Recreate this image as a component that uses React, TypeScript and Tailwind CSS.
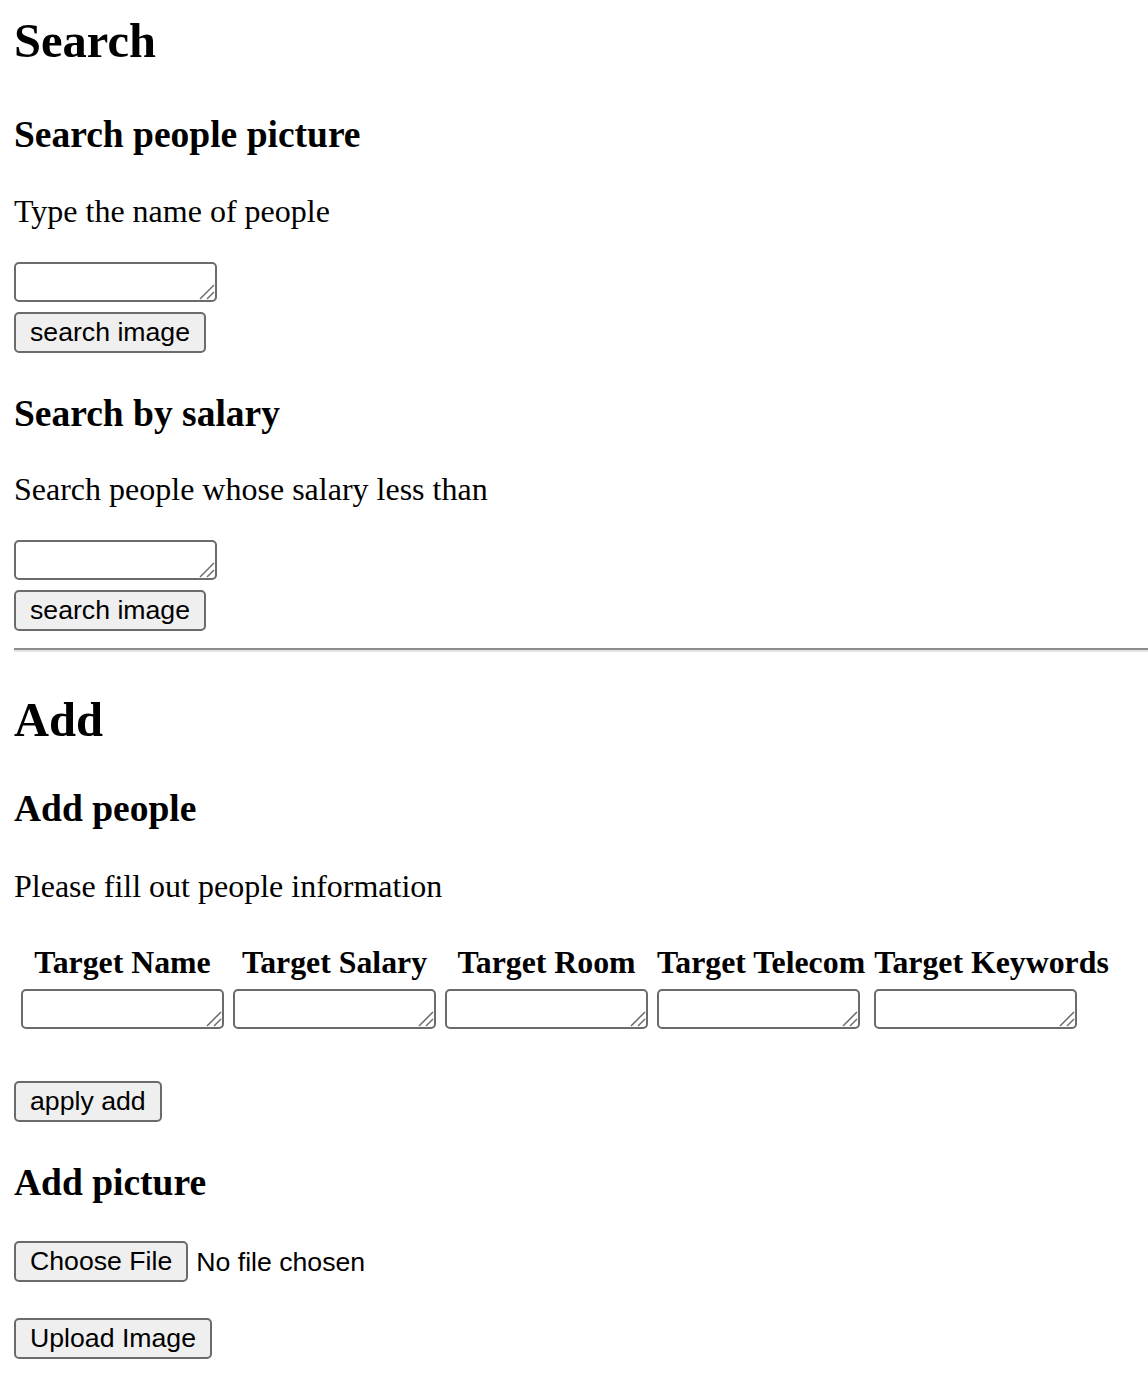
import React from "react";

const serif = "font-['Liberation_Serif','Times_New_Roman',serif]";
const sans = "font-['Liberation_Sans',Arial,sans-serif]";

function Grip() {
  return (
    <svg
      className="absolute right-[2px] bottom-[2px] pointer-events-none"
      width="16"
      height="16"
      viewBox="0 0 16 16"
    >
      <line x1="1" y1="15" x2="15" y2="1" stroke="#6b6b6b" strokeWidth="1.5" />
      <line x1="8" y1="15" x2="15" y2="8" stroke="#6b6b6b" strokeWidth="1.5" />
    </svg>
  );
}

function Box({ className = "" }: { className?: string }) {
  return (
    <div className={`relative w-[203px] h-[40px] ${className}`}>
      <textarea className="block w-full h-full resize-none border-2 border-[#6b6b6b] rounded-[5px] bg-white px-1 outline-none" />
      <Grip />
    </div>
  );
}

function Btn({ label, className = "" }: { label: string; className?: string }) {
  return (
    <button
      className={`inline-flex h-[41px] items-center px-[14px] border-2 border-[#6b6b6b] rounded-[5px] bg-[#efefef] text-black text-[26.67px] leading-none ${sans} ${className}`}
    >
      {label}
    </button>
  );
}

function App() {
  const fields = ["Target Name", "Target Salary", "Target Room", "Target Telecom", "Target Keywords"];

  return (
    <div className={`min-h-screen bg-white text-black pl-[14px] pb-[15px] ${serif}`}>
      {/* Search */}
      <h1 className="pt-[13px] text-[48.5px] leading-[55px] font-bold">Search</h1>

      <h2 className="mt-[45px] text-[37.5px] leading-[44px] font-bold">Search people picture</h2>
      <p className="mt-[36px] text-[32px] leading-[37px]">Type the name of people</p>
      <Box className="mt-[32px]" />
      <Btn label="search image" className="mt-[10px]" />

      <h2 className="mt-[39px] text-[37.5px] leading-[44px] font-bold">Search by salary</h2>
      <p className="mt-[35px] text-[32px] leading-[37px]">Search people whose salary less than</p>
      <Box className="mt-[32px]" />
      <Btn label="search image" className="mt-[10px]" />

      <div className="mt-[17px] h-[4px] border-t-2 border-b-2 border-t-[#8c8c8c] border-b-[#e4e4e4]" />

      {/* Add */}
      <h1 className="mt-[40px] text-[48.5px] leading-[55px] font-bold">Add</h1>

      <h2 className="mt-[40px] text-[37.5px] leading-[44px] font-bold">Add people</h2>
      <p className="mt-[37px] text-[32px] leading-[37px]">Please fill out people information</p>

      <table className="mt-[33px] border-separate border-spacing-[5px]">
        <thead>
          <tr>
            {fields.map((f) => (
              <th key={f} className="p-[2px] text-[31.8px] leading-[35px] font-bold text-center whitespace-nowrap">
                {f}
              </th>
            ))}
          </tr>
        </thead>
        <tbody>
          <tr>
            {fields.map((f) => (
              <td key={f} className="p-[2px] align-top">
                <Box />
              </td>
            ))}
          </tr>
        </tbody>
      </table>

      <Btn label="apply add" className="mt-[45px]" />

      <h2 className="mt-[39px] text-[37.5px] leading-[44px] font-bold">Add picture</h2>
      <div className="mt-[36px] flex items-center">
        <Btn label="Choose File" />
        <span className={`ml-[8px] text-[26.67px] ${sans}`}>No file chosen</span>
      </div>
      <Btn label="Upload Image" className="mt-[36px]" />
    </div>
  );
}

export default App;
